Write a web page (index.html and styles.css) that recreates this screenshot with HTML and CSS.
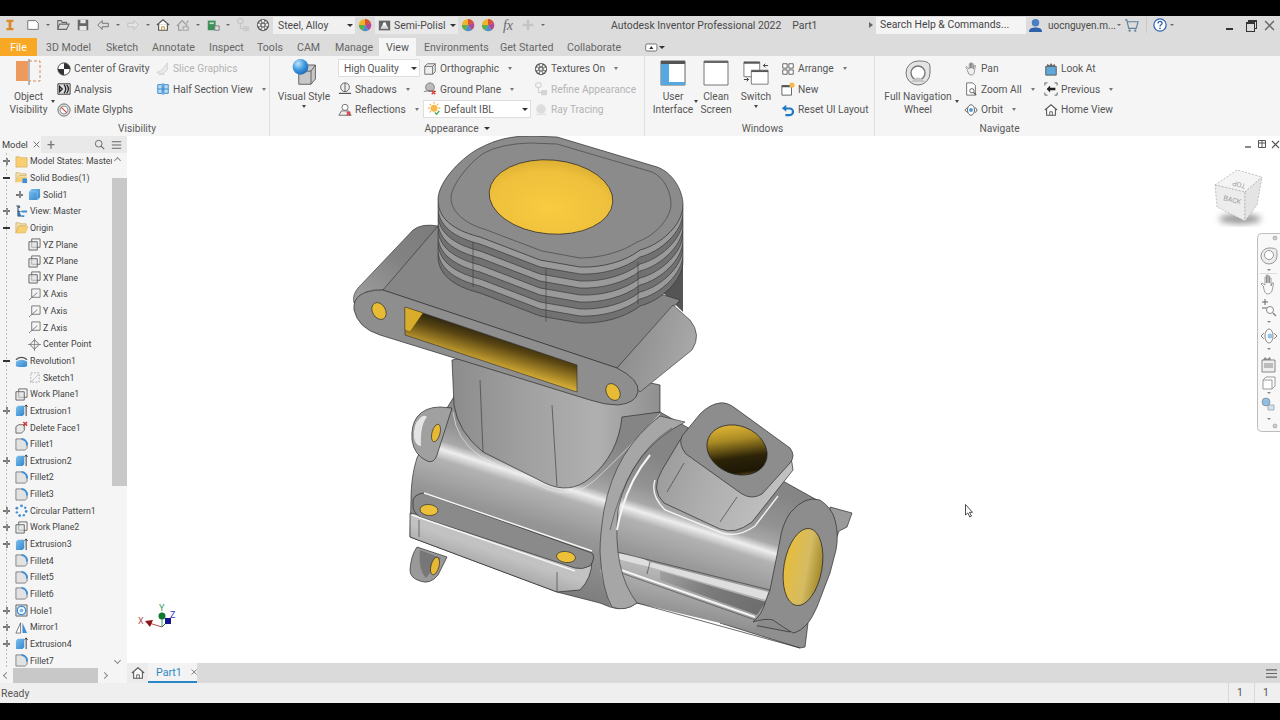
FILE: index.html
```html
<!DOCTYPE html>
<html lang="en">
<head>
<meta charset="utf-8">
<title>Autodesk Inventor Professional 2022</title>
<link rel="stylesheet" href="styles.css">
</head>
<body>
<svg class="defs" width="0" height="0" aria-hidden="true">
  <defs>
    <linearGradient id="bl" x1="0" y1="0" x2="1" y2="1"><stop offset="0" stop-color="#7fc0ee"/><stop offset="1" stop-color="#2f86cc"/></linearGradient>
    <radialGradient id="sph" cx=".35" cy=".3" r=".8"><stop offset="0" stop-color="#bfe4fa"/><stop offset=".5" stop-color="#3f9be0"/><stop offset="1" stop-color="#1a62b0"/></radialGradient>
    <symbol id="logo" viewBox="0 0 16 16"><path d="M4 2h8v2.500H9.600v7H12V14H4v-2.500h2.400v-7H4z" fill="#d98b2b"/></symbol>
    <symbol id="new" viewBox="0 0 16 16"><path d="M2 3h9l3 3v7H2z" fill="#fff" stroke="#666"/></symbol>
    <symbol id="open" viewBox="0 0 16 16"><path d="M2 13V3h4l1 2h5v2M2 13l2-6h11l-3 6z" fill="none" stroke="#666" stroke-width="1.200"/></symbol>
    <symbol id="save" viewBox="0 0 16 16"><path d="M2 2h12v12H2z" fill="#666"/><path d="M5 2h6v4H5zM4 9h8v5H4z" fill="#e6e6e6"/></symbol>
    <symbol id="undo" viewBox="0 0 16 16"><path d="M7 3L2 8l5 5v-3h7V6H7z" fill="#dcdcdc" stroke="#666"/></symbol>
    <symbol id="redo" viewBox="0 0 16 16"><path d="M9 3l5 5-5 5v-3H2V6h7z" fill="#e6e6e6" stroke="#bbb"/></symbol>
    <symbol id="home" viewBox="0 0 16 16"><path d="M1 8l7-6 7 6M3 7v7h10V7" fill="#fff" stroke="#555" stroke-width="1.300"/><path d="M6.500 14v-4h3v4" fill="none" stroke="#c08a2b"/></symbol>
    <symbol id="homeg" viewBox="0 0 16 16"><path d="M1 9l6-6 6 6M3 8v6h4M12 6l2-3" fill="none" stroke="#999" stroke-width="1.300"/><path d="M8 10h6v4H8z" fill="#ddd" stroke="#999"/></symbol>
    <symbol id="green" viewBox="0 0 16 16"><path d="M2 3h9v11H2z" fill="#3f8f5b"/><path d="M4 5h5v2H4z" fill="#bfe0c8"/><path d="M10 9h5v5h-5z" fill="#ddd" stroke="#777"/></symbol>
    <symbol id="refine" viewBox="0 0 16 16"><rect x="2" y="1" width="6" height="5" rx="1" fill="none" stroke="#bbb"/><path d="M5 6v6h3" fill="none" stroke="#bbb"/><rect x="8" y="9" width="7" height="6" rx="1" fill="#ccc"/></symbol>
    <symbol id="tex" viewBox="0 0 16 16"><circle cx="8" cy="8" r="7" fill="#555"/><g fill="#eee"><circle cx="8" cy="3.500" r="1.600"/><circle cx="8" cy="12.500" r="1.600"/><circle cx="3.500" cy="8" r="1.600"/><circle cx="12.500" cy="8" r="1.600"/><circle cx="5" cy="5" r="1.300"/><circle cx="11" cy="5" r="1.300"/><circle cx="5" cy="11" r="1.300"/><circle cx="11" cy="11" r="1.300"/><circle cx="8" cy="8" r="1.800"/></g></symbol>
    <symbol id="wheel" viewBox="0 0 16 16"><circle cx="8" cy="8" r="7" fill="#f0b429"/><path d="M8 8V1a7 7 0 0 1 6.500 4.500z" fill="#d8523c"/><path d="M8 8l6.500-2.500A7 7 0 0 1 12 14z" fill="#b0479b"/><path d="M8 8l4 6a7 7 0 0 1-7 .4z" fill="#4a90d9"/><path d="M8 8l-3 6.400A7 7 0 0 1 1 8z" fill="#5cae55"/></symbol>
    <symbol id="semi" viewBox="0 0 16 16"><path d="M1 2h14v12H1z" fill="#666"/><path d="M3 12l3-6h4l3 6z" fill="#ddd"/><circle cx="8" cy="6" r="2" fill="#fff"/></symbol>
    <symbol id="plus" viewBox="0 0 16 16"><path d="M6.500 2h3v4.500H14v3H9.500V14h-3V9.500H2v-3h4.500z" fill="#c4c4c4"/></symbol>
    <symbol id="user" viewBox="0 0 16 16"><circle cx="8" cy="5" r="4" fill="#4a7fc4"/><path d="M1 15c0-4 3-5 7-5s7 1 7 5z" fill="#2f62ad"/></symbol>
    <symbol id="cart" viewBox="0 0 16 16"><path d="M1 2h2l2 9h8l2-7H4" fill="none" stroke="#5e7f99" stroke-width="1.200"/><circle cx="6" cy="13.500" r="1.200" fill="#5e7f99"/><circle cx="12" cy="13.500" r="1.200" fill="#5e7f99"/></symbol>
    <symbol id="help" viewBox="0 0 16 16"><circle cx="8" cy="8" r="7" fill="#fff" stroke="#2f62ad" stroke-width="1.400"/><path d="M5.800 6.200c0-3 4.600-3 4.600-.2 0 1.800-2.400 1.700-2.400 3.600" fill="none" stroke="#2f62ad" stroke-width="1.500"/><circle cx="8" cy="11.800" r="1" fill="#2f62ad"/></symbol>
    <symbol id="objvis" viewBox="0 0 30 28"><path d="M2 3h12v20H2z" fill="#ee9a5e"/><path d="M15 1v26" stroke="#777"/><path d="M15 3h11v20H15" fill="none" stroke="#d9884f" stroke-dasharray="3 2"/></symbol>
    <symbol id="cog" viewBox="0 0 16 16"><circle cx="8" cy="8" r="7" fill="#fff" stroke="#333"/><path d="M8 8V1a7 7 0 0 1 7 7zM8 8v7a7 7 0 0 1-7-7z" fill="#333"/></symbol>
    <symbol id="analysis" viewBox="0 0 16 16"><path d="M1 2h14v12H1z" fill="#ddd" stroke="#333"/><path d="M3 5l3 3-3 3zM8 3q4 5 0 10M11 3q4 5 0 10" fill="none" stroke="#222" stroke-width="1.500"/></symbol>
    <symbol id="imate" viewBox="0 0 16 16"><circle cx="8" cy="8" r="7" fill="#ddd" stroke="#666"/><circle cx="8" cy="8" r="4.500" fill="#fff" stroke="#888"/><path d="M5 5l6 6" stroke="#c8574a" stroke-width="1.600"/></symbol>
    <symbol id="slice" viewBox="0 0 16 16"><path d="M1 12l6-3 6-8v8l-6 5z" fill="#e6e6e6" stroke="#c8c8c8"/><path d="M3 14h7" stroke="#ccc"/></symbol>
    <symbol id="half" viewBox="0 0 16 16"><path d="M2 3h5v10H2zM9 3h5v10H9z" fill="#bcdcf4" stroke="#2f86cc"/><path d="M2 8h12M8 1v14" stroke="#2f86cc"/></symbol>
    <symbol id="vstyle" viewBox="0 0 30 32"><path d="M12 11l6-3h10v16l-5 6H9V15z" fill="#c8c8c8" stroke="#555"/><path d="M9 15h14v15M23 15l5-7" fill="none" stroke="#555"/><circle cx="11" cy="10" r="9" fill="url(#sph)"/></symbol>
    <symbol id="shadow" viewBox="0 0 16 16"><circle cx="8" cy="6" r="5" fill="#eee" stroke="#555"/><path d="M8 1v10" stroke="#555"/><path d="M1 13h14" stroke="#555" stroke-width="1.400"/></symbol>
    <symbol id="reflect" viewBox="0 0 16 16"><path d="M1 14l3-5h8l3 5z" fill="#eee" stroke="#666"/><circle cx="8" cy="5" r="3.500" fill="#fff" stroke="#666"/><path d="M10 10l4 4M14 10l-4 4" stroke="#d33" stroke-width="1.500"/></symbol>
    <symbol id="ortho" viewBox="0 0 16 16"><path d="M2 5l3-3h9v9l-3 3H2z" fill="#eee" stroke="#666"/><path d="M2 5h9v9M11 5l3-3" fill="none" stroke="#666"/></symbol>
    <symbol id="ground" viewBox="0 0 16 16"><circle cx="8" cy="6" r="5" fill="#bbb" stroke="#777"/><path d="M1 11q7-3 14 0" stroke="#777" fill="none"/><path d="M10 10l4 4M14 10l-4 4" stroke="#d33" stroke-width="1.500"/></symbol>
    <symbol id="ibl" viewBox="0 0 16 16"><circle cx="8" cy="7" r="4" fill="#f6b84a"/><g stroke="#f2a83b" stroke-width="1.200"><path d="M8 0v2M1 7h2M13 7h2M3 2l1.500 1.500M13 2l-1.500 1.500M3 12l1.500-1.500"/></g><path d="M9 12l2 2 3-4" stroke="#4caf50" stroke-width="1.500" fill="none"/></symbol>
    <symbol id="ray" viewBox="0 0 16 16"><circle cx="8" cy="7" r="5.500" fill="#d8d8d8"/><path d="M2 13h12" stroke="#e2e2e2" stroke-width="2"/></symbol>
    <symbol id="ui" viewBox="0 0 26 26"><path d="M1 1h24v24H1z" fill="#fff" stroke="#666"/><path d="M1 1h24v3H1z" fill="#555"/><path d="M1 4h8v21H1z" fill="#57a8e2"/><path d="M9 22h16v3H9z" fill="#57a8e2"/></symbol>
    <symbol id="clean" viewBox="0 0 26 26"><path d="M1 1h24v24H1z" fill="#fff" stroke="#777"/><path d="M1 1h24v2H1z" fill="#666"/></symbol>
    <symbol id="switch" viewBox="0 0 28 26"><path d="M1 1h17v16H1z" fill="#fff" stroke="#777"/><path d="M1 1h17v2H1z" fill="#555"/><path d="M9 10h18v15H9z" fill="#fff" stroke="#777"/><path d="M9 10h18v2H9z" fill="#555"/><path d="M27 5h-5M24 3l-2 2 2 2M1 20h5M4 18l2 2-2 2" fill="none" stroke="#333"/></symbol>
    <symbol id="arrange" viewBox="0 0 16 16"><path d="M2 2h5v5H2zM9 2h5v5H9zM2 9h5v5H2zM9 9h5v5H9z" fill="#fff" stroke="#555"/></symbol>
    <symbol id="newwin" viewBox="0 0 16 16"><path d="M1 4h11v11H1z" fill="#fff" stroke="#555"/><path d="M1 4h11v2H1z" fill="#555"/><circle cx="12.500" cy="3.500" r="3" fill="#f6b84a"/></symbol>
    <symbol id="reset" viewBox="0 0 16 16"><path d="M6 2L1 6l5 4V7.500h4a2.500 2.500 0 0 1 0 5H5V15h5a5 5 0 0 0 0-10H6z" fill="#1f79c4"/></symbol>
    <symbol id="navw" viewBox="0 0 26 26"><path d="M13 1c8 0 12 1 12 6v6a12 12 0 1 1-12-12z" fill="#e4e4e4" stroke="#777"/><circle cx="13" cy="13" r="7" fill="#fff" stroke="#777" stroke-width="1.400"/><path d="M6 22q7-9 14 0" fill="#c4c4c4"/></symbol>
    <symbol id="pan" viewBox="0 0 16 16"><path d="M4 9L2 6l1-1 3 3V2h1.500v5V1H9v6-5h1.500v6l1-4H13l-1 6q0 5-4 5-3 0-4-5z" fill="#eee" stroke="#777" stroke-width=".8"/></symbol>
    <symbol id="zoomall" viewBox="0 0 16 16"><path d="M3 1h7l3 3v11H3z" fill="#fff" stroke="#666"/><circle cx="9" cy="10" r="2.500" fill="#fff" stroke="#555"/><path d="M11 12l3 3" stroke="#555" stroke-width="1.400"/></symbol>
    <symbol id="orbit" viewBox="0 0 16 16"><path d="M1 8l3-3M1 8l3 3M15 8l-2-3M15 8l-2 3" stroke="#555" fill="none"/><ellipse cx="8" cy="8" rx="4" ry="6" fill="#fff" stroke="#555"/><circle cx="8" cy="8" r="2.200" fill="#4a9bd9"/></symbol>
    <symbol id="look" viewBox="0 0 16 16"><path d="M2 5h12v10H2z" fill="#5fa8d8" stroke="#555"/><path d="M3 5l1-3 2 2 2-3 2 3 2-2 1 3" fill="#666"/></symbol>
    <symbol id="prev" viewBox="0 0 16 16"><path d="M1 4V1h3M12 1h3v3M15 12v3h-3M4 15H1v-3" fill="none" stroke="#555"/><path d="M7 4L3 8l4 4V9.500h6v-3H7z" fill="#222"/></symbol>
    <symbol id="homev" viewBox="0 0 16 16"><path d="M1 8l7-6 7 6M3 7v7h10V7" fill="#fff" stroke="#555" stroke-width="1.200"/><path d="M6.500 14v-4h3v4" fill="none" stroke="#555"/></symbol>
    <symbol id="widget" viewBox="0 0 20 12"><rect x="1" y="1" width="16" height="10" rx="2" fill="#fff" stroke="#444"/><path d="M6 8l3-4 3 4z" fill="#333"/></symbol>
    <symbol id="close" viewBox="0 0 10 10"><path d="M1 1l8 8M9 1l-8 8" stroke="#666" stroke-width="1.300"/></symbol>
    <symbol id="search" viewBox="0 0 14 14"><circle cx="6" cy="6" r="4.300" fill="none" stroke="#666" stroke-width="1.200"/><path d="M9 9l4 4" stroke="#666" stroke-width="1.400"/></symbol>
    <symbol id="burger" viewBox="0 0 14 12"><path d="M1 2h12M1 6h12M1 10h12" stroke="#666" stroke-width="1.300"/></symbol>
    <symbol id="t-folder" viewBox="0 0 14 14"><path d="M1 2h4l1 1h7v10H1z" fill="#f8cf73" stroke="#d4a94c" stroke-width=".7"/></symbol>
    <symbol id="t-folderb" viewBox="0 0 14 14"><path d="M1 2h4l1 1h6v2H4l-3 7z" fill="#f3e3b6" stroke="#c9a24a" stroke-width=".7"/><path d="M1 12l3-6h9l-2 6z" fill="#f8cf73"/><path d="M8 8h5v5H8z" fill="#3f8fd6"/></symbol>
    <symbol id="t-foldero" viewBox="0 0 14 14"><path d="M1 2h4l1 1h6v2H4l-3 8z" fill="#f3e3b6" stroke="#c9a24a" stroke-width=".7"/><path d="M1 13l3-7h10l-3 7z" fill="#f8cf73" stroke="#d4a94c" stroke-width=".5"/></symbol>
    <symbol id="t-solid" viewBox="0 0 14 14"><path d="M1 4l3-3h9v9l-3 3H1z" fill="url(#bl)"/><path d="M1 4h9v9" fill="none" stroke="#9fd2f5" stroke-width=".5"/></symbol>
    <symbol id="t-view" viewBox="0 0 14 14"><path d="M3 1h2v2H3zM1 1h3M3 3v9h4M3 7h4" fill="#2f86cc" stroke="#444" stroke-width=".7"/><path d="M7 6h6v2H7zM7 11h3v2H7z" fill="#3f8fd6"/></symbol>
    <symbol id="t-plane" viewBox="0 0 14 14"><path d="M4 1h9v9H4z" fill="none" stroke="#666"/><path d="M1 4h9v9H1z" fill="#ddd" fill-opacity=".6" stroke="#666"/></symbol>
    <symbol id="t-axis" viewBox="0 0 14 14"><path d="M4 1h9v9H4V1" fill="none" stroke="#777"/><path d="M1 13l9-8" stroke="#777"/></symbol>
    <symbol id="t-point" viewBox="0 0 14 14"><path d="M7 2l5 5-5 5-5-5z" fill="none" stroke="#666"/><path d="M7 0v14M0 7h14" stroke="#666" stroke-width=".7"/></symbol>
    <symbol id="t-rev" viewBox="0 0 14 14"><path d="M1 7q6-4 12 0v5q-6 2-12 0z" fill="url(#bl)"/><path d="M1 5q6-5 12 0" fill="none" stroke="#555" stroke-width="1.400"/></symbol>
    <symbol id="t-sketch" viewBox="0 0 14 14"><path d="M3 2h9v10H3z" fill="none" stroke="#aaa" stroke-dasharray="2 1.500"/><path d="M2 13l9-9" stroke="#bbb"/></symbol>
    <symbol id="t-ext" viewBox="0 0 14 14"><path d="M1 4l2-2h7v9l-2 2H1z" fill="url(#bl)"/><path d="M12 13V1M10.500 3L12 1l1.500 2" fill="none" stroke="#333"/></symbol>
    <symbol id="t-del" viewBox="0 0 14 14"><path d="M1 6l3-2h6v6l-3 3H1z" fill="#e8e8e8" stroke="#666"/><path d="M9 1l4 4M13 1L9 5" stroke="#d42e2e" stroke-width="1.500"/></symbol>
    <symbol id="t-fil" viewBox="0 0 14 14"><path d="M1 1h7q5 1 5 6v4l-2 2H1z" fill="#e2e2e2" stroke="#666" stroke-width=".8"/><path d="M7 1q6 1 6 7" fill="none" stroke="#3f8fd6" stroke-width="2"/></symbol>
    <symbol id="t-pat" viewBox="0 0 14 14"><g fill="#3f8fd6"><circle cx="7" cy="2" r="1.500"/><circle cx="11" cy="4" r="1.300"/><circle cx="12" cy="8" r="1.500"/><circle cx="9.500" cy="12" r="1.300"/><circle cx="5" cy="12.500" r="1.500"/><circle cx="2" cy="9" r="1.300"/><circle cx="2" cy="4.500" r="1.500"/></g></symbol>
    <symbol id="t-hole" viewBox="0 0 14 14"><path d="M1 1h12v12H1z" fill="#ddd" stroke="#666"/><circle cx="7" cy="7" r="4.500" fill="#fff" stroke="#3f8fd6" stroke-width="1.500"/><circle cx="7" cy="7" r="2.200" fill="#7fb8e4"/></symbol>
    <symbol id="t-mir" viewBox="0 0 14 14"><path d="M6 2L1 13h5z" fill="#fff" stroke="#555" stroke-width=".8"/><path d="M8 2l5 11H8z" fill="#3f8fd6"/></symbol>
    <linearGradient id="bodyG" gradientUnits="userSpaceOnUse" x1="480" y1="400" x2="430" y2="560"><stop offset="0" stop-color="#858585"/><stop offset=".2" stop-color="#939393"/><stop offset=".3" stop-color="#a8a8a8"/><stop offset=".35" stop-color="#eeeeee"/><stop offset=".41" stop-color="#b2b2b2"/><stop offset=".6" stop-color="#969696"/><stop offset="1" stop-color="#7a7a7a"/></linearGradient>
    <linearGradient id="neckG" x1="0" y1="0" x2="1" y2="0"><stop offset="0" stop-color="#8c8c8c"/><stop offset=".35" stop-color="#a0a0a0"/><stop offset=".7" stop-color="#b0b0b0"/><stop offset="1" stop-color="#8f8f8f"/></linearGradient>
    <linearGradient id="bossG" x1="0" y1="0" x2="1" y2=".3"><stop offset="0" stop-color="#949494"/><stop offset=".5" stop-color="#adadad"/><stop offset="1" stop-color="#c0c0c0"/></linearGradient>
    <linearGradient id="flR" x1="0" y1="0" x2="1" y2=".3"><stop offset="0" stop-color="#888"/><stop offset=".6" stop-color="#9a9a9a"/><stop offset="1" stop-color="#a8a8a8"/></linearGradient>
    <linearGradient id="flL" x1="0" y1="1" x2="1" y2="0"><stop offset="0" stop-color="#a0a0a0"/><stop offset=".5" stop-color="#838383"/><stop offset="1" stop-color="#7a7a7a"/></linearGradient>
    <linearGradient id="slotG" gradientUnits="userSpaceOnUse" x1="500" y1="328" x2="488" y2="370"><stop offset="0" stop-color="#111"/><stop offset=".4" stop-color="#5a4612"/><stop offset="1" stop-color="#f0c33c"/></linearGradient>
    <radialGradient id="topG" cx=".5" cy=".65" r=".7"><stop offset="0" stop-color="#f8cb40"/><stop offset=".7" stop-color="#eec03c"/><stop offset="1" stop-color="#d8aa30"/></radialGradient>
    <linearGradient id="bossH" gradientUnits="userSpaceOnUse" x1="722" y1="428" x2="748" y2="474"><stop offset="0" stop-color="#e2b736"/><stop offset=".3" stop-color="#a98a24"/><stop offset=".65" stop-color="#2c2308"/><stop offset=".92" stop-color="#1d1705"/><stop offset="1" stop-color="#5a4712"/></linearGradient>
    <linearGradient id="endH" x1="0" y1="0" x2="1" y2="0"><stop offset="0" stop-color="#e7bd3c"/><stop offset=".6" stop-color="#d5bb62"/><stop offset="1" stop-color="#a38a2c"/></linearGradient>
    <linearGradient id="railS" gradientUnits="userSpaceOnUse" x1="460" y1="540" x2="450" y2="570"><stop offset="0" stop-color="#c2c2c2"/><stop offset="1" stop-color="#9a9a9a"/></linearGradient>
    <linearGradient id="lowG" gradientUnits="userSpaceOnUse" x1="690" y1="575" x2="680" y2="625"><stop offset="0" stop-color="#b8b8b8"/><stop offset="1" stop-color="#888"/></linearGradient>
    <linearGradient id="wedgeG" gradientUnits="userSpaceOnUse" x1="660" y1="570" x2="760" y2="605"><stop offset="0" stop-color="#a0a0a0"/><stop offset=".5" stop-color="#7b7b7b"/><stop offset="1" stop-color="#6e6e6e"/></linearGradient>
    <filter id="soft" x="-30%" y="-30%" width="160%" height="160%"><feGaussianBlur stdDeviation="3"/></filter>
    <path id="headS" d="M438 200C438 180 465 155 480 148C495 140 510 136 530 136L557 137L657 167C672 172 683 190 683 205C683 225 660 245 640 250C625 262 600 268 580 267L540 260L480 237C460 232 438 222 438 200Z"/>
  </defs>
</svg>

<div class="app">
  <header class="titlebar">
    <svg class="logo"><use href="#logo"/></svg>
    <span class="qa"><svg><use href="#new"/></svg></span><i class="qc"></i>
    <span class="qa"><svg><use href="#open"/></svg></span>
    <span class="qa"><svg><use href="#save"/></svg></span>
    <span class="qa"><svg><use href="#undo"/></svg></span><i class="qc"></i>
    <span class="qa"><svg><use href="#redo"/></svg></span><i class="qc"></i>
    <span class="qa"><svg><use href="#home"/></svg></span>
    <span class="qa"><svg><use href="#homeg"/></svg></span><i class="qc"></i>
    <span class="qa"><svg><use href="#green"/></svg></span><i class="qc"></i>
    <span class="qa"><svg><use href="#refine"/></svg></span>
    <span class="qa"><svg><use href="#tex"/></svg></span>
    <div class="qcombo material"><span>Steel, Alloy</span><b class="caret dark"></b></div>
    <span class="qa"><svg><use href="#wheel"/></svg></span>
    <div class="qcombo visual"><svg><use href="#semi"/></svg><span class="clip">Semi-Polisl</span><b class="caret dark"></b></div>
    <span class="qa"><svg><use href="#wheel"/></svg></span>
    <span class="qa"><svg><use href="#wheel"/></svg></span>
    <span class="qa fx">fx</span>
    <span class="qa"><svg><use href="#plus"/></svg></span><i class="qc"></i>
    <div class="apptitle"><span>Autodesk Inventor Professional 2022</span><span>Part1</span></div>
    <div class="t-right">
      <i class="tri-r"></i>
      <div class="searchbox">Search Help &amp; Commands...</div>
      <svg class="t-user"><use href="#user"/></svg>
      <span class="username">uocnguyen.m...</span><i class="qc"></i>
      <svg class="t-cart"><use href="#cart"/></svg>
      <i class="t-sep"></i>
      <svg class="t-help"><use href="#help"/></svg><i class="qc"></i>
      <div class="winctl">
        <span class="min"></span>
        <span class="rest"></span>
        <span class="cls"><svg><use href="#close"/></svg></span>
      </div>
    </div>
  </header>

  <nav class="tabs">
    <span class="tab file">File</span>
    <span class="tab t1">3D Model</span>
    <span class="tab t2">Sketch</span>
    <span class="tab t3">Annotate</span>
    <span class="tab t4">Inspect</span>
    <span class="tab t5">Tools</span>
    <span class="tab t6">CAM</span>
    <span class="tab t7">Manage</span>
    <span class="tab active">View</span>
    <span class="tab t9">Environments</span>
    <span class="tab t10">Get Started</span>
    <span class="tab t11">Collaborate</span>
    <svg class="widget"><use href="#widget"/></svg><b class="caret dark"></b>
  </nav>

  <section class="ribbon">
    <div class="panel p-vis">
      <div class="pbody">
        <div class="big b-obj"><svg class="ico30"><use href="#objvis"/></svg><span>Object<br>Visibility</span><b class="caret side"></b></div>
        <div class="col c-a">
          <div class="cmd"><svg><use href="#cog"/></svg>Center of Gravity</div>
          <div class="cmd"><svg><use href="#analysis"/></svg>Analysis</div>
          <div class="cmd"><svg><use href="#imate"/></svg>iMate Glyphs</div>
        </div>
        <div class="col">
          <div class="cmd off"><svg><use href="#slice"/></svg>Slice Graphics</div>
          <div class="cmd"><svg><use href="#half"/></svg>Half Section View<b class="caret"></b></div>
        </div>
      </div>
      <div class="ptitle">Visibility</div>
    </div>
    <div class="panel p-app">
      <div class="pbody">
        <div class="big b-vs"><svg class="ico30"><use href="#vstyle"/></svg><span>Visual Style</span><b class="caret under"></b></div>
        <div class="col c-q">
          <div class="combo hq"><span>High Quality</span><b class="caret dark"></b></div>
          <div class="cmd"><svg><use href="#shadow"/></svg>Shadows<b class="caret"></b></div>
          <div class="cmd"><svg><use href="#reflect"/></svg>Reflections<b class="caret"></b></div>
        </div>
        <div class="col c-o">
          <div class="cmd"><svg><use href="#ortho"/></svg>Orthographic<b class="caret"></b></div>
          <div class="cmd"><svg><use href="#ground"/></svg>Ground Plane<b class="caret"></b></div>
          <div class="combo ibl"><svg><use href="#ibl"/></svg><span>Default IBL</span><b class="caret dark"></b></div>
        </div>
        <div class="col">
          <div class="cmd"><svg><use href="#tex"/></svg>Textures On<b class="caret"></b></div>
          <div class="cmd off"><svg><use href="#refine"/></svg>Refine Appearance</div>
          <div class="cmd off"><svg><use href="#ray"/></svg>Ray Tracing</div>
        </div>
      </div>
      <div class="ptitle">Appearance<b class="caret dark"></b></div>
    </div>
    <div class="panel p-win">
      <div class="pbody">
        <div class="big b-ui"><svg class="ico26"><use href="#ui"/></svg><span>User<br>Interface</span><b class="caret side"></b></div>
        <div class="big b-cl"><svg class="ico26"><use href="#clean"/></svg><span>Clean<br>Screen</span></div>
        <div class="big b-sw"><svg class="ico26"><use href="#switch"/></svg><span>Switch</span><b class="caret under"></b></div>
        <div class="col c-w">
          <div class="cmd"><svg><use href="#arrange"/></svg>Arrange<b class="caret"></b></div>
          <div class="cmd"><svg><use href="#newwin"/></svg>New</div>
          <div class="cmd"><svg><use href="#reset"/></svg>Reset UI Layout</div>
        </div>
      </div>
      <div class="ptitle">Windows</div>
    </div>
    <div class="panel p-nav">
      <div class="pbody">
        <div class="big b-nav"><svg class="ico26"><use href="#navw"/></svg><span>Full Navigation<br>Wheel</span><b class="caret side"></b></div>
        <div class="col c-n">
          <div class="cmd"><svg><use href="#pan"/></svg>Pan</div>
          <div class="cmd"><svg><use href="#zoomall"/></svg>Zoom All<b class="caret"></b></div>
          <div class="cmd"><svg><use href="#orbit"/></svg>Orbit<b class="caret"></b></div>
        </div>
        <div class="col">
          <div class="cmd"><svg><use href="#look"/></svg>Look At</div>
          <div class="cmd"><svg><use href="#prev"/></svg>Previous<b class="caret"></b></div>
          <div class="cmd"><svg><use href="#homev"/></svg>Home View</div>
        </div>
      </div>
      <div class="ptitle">Navigate</div>
    </div>
  </section>

  <main class="work">
    <aside class="browser">
      <div class="bhead">
        <div class="btab">Model<svg class="x"><use href="#close"/></svg></div>
        <span class="bplus">+</span>
        <svg class="bsearch"><use href="#search"/></svg>
        <svg class="bburger"><use href="#burger"/></svg>
      </div>
      <div class="bbody">
        <div class="tree">
          <div class="row"><i class="ex p"></i><svg><use href="#t-folder"/></svg>Model States: Master</div>
          <div class="row"><i class="ex m"></i><svg><use href="#t-folderb"/></svg>Solid Bodies(1)</div>
          <div class="row l1"><i class="ex p"></i><svg><use href="#t-solid"/></svg>Solid1</div>
          <div class="row"><i class="ex p"></i><svg><use href="#t-view"/></svg>View: Master</div>
          <div class="row"><i class="ex m"></i><svg><use href="#t-foldero"/></svg>Origin</div>
          <div class="row l1"><i class="ex"></i><svg><use href="#t-plane"/></svg>YZ Plane</div>
          <div class="row l1"><i class="ex"></i><svg><use href="#t-plane"/></svg>XZ Plane</div>
          <div class="row l1"><i class="ex"></i><svg><use href="#t-plane"/></svg>XY Plane</div>
          <div class="row l1"><i class="ex"></i><svg><use href="#t-axis"/></svg>X Axis</div>
          <div class="row l1"><i class="ex"></i><svg><use href="#t-axis"/></svg>Y Axis</div>
          <div class="row l1"><i class="ex"></i><svg><use href="#t-axis"/></svg>Z Axis</div>
          <div class="row l1"><i class="ex"></i><svg><use href="#t-point"/></svg>Center Point</div>
          <div class="row"><i class="ex m"></i><svg><use href="#t-rev"/></svg>Revolution1</div>
          <div class="row l1"><i class="ex"></i><svg><use href="#t-sketch"/></svg>Sketch1</div>
          <div class="row"><i class="ex"></i><svg><use href="#t-plane"/></svg>Work Plane1</div>
          <div class="row"><i class="ex p"></i><svg><use href="#t-ext"/></svg>Extrusion1</div>
          <div class="row"><i class="ex"></i><svg><use href="#t-del"/></svg>Delete Face1</div>
          <div class="row"><i class="ex"></i><svg><use href="#t-fil"/></svg>Fillet1</div>
          <div class="row"><i class="ex p"></i><svg><use href="#t-ext"/></svg>Extrusion2</div>
          <div class="row"><i class="ex"></i><svg><use href="#t-fil"/></svg>Fillet2</div>
          <div class="row"><i class="ex"></i><svg><use href="#t-fil"/></svg>Fillet3</div>
          <div class="row"><i class="ex p"></i><svg><use href="#t-pat"/></svg>Circular Pattern1</div>
          <div class="row"><i class="ex p"></i><svg><use href="#t-plane"/></svg>Work Plane2</div>
          <div class="row"><i class="ex p"></i><svg><use href="#t-ext"/></svg>Extrusion3</div>
          <div class="row"><i class="ex"></i><svg><use href="#t-fil"/></svg>Fillet4</div>
          <div class="row"><i class="ex"></i><svg><use href="#t-fil"/></svg>Fillet5</div>
          <div class="row"><i class="ex"></i><svg><use href="#t-fil"/></svg>Fillet6</div>
          <div class="row"><i class="ex p"></i><svg><use href="#t-hole"/></svg>Hole1</div>
          <div class="row"><i class="ex p"></i><svg><use href="#t-mir"/></svg>Mirror1</div>
          <div class="row"><i class="ex p"></i><svg><use href="#t-ext"/></svg>Extrusion4</div>
          <div class="row"><i class="ex"></i><svg><use href="#t-fil"/></svg>Fillet7</div>
        </div>
        <div class="vscroll"><i class="chev ch-up"></i><div class="vthumb"></div><i class="chev ch-down"></i></div>
      </div>
      <div class="hscroll"><i class="chev ch-left"></i><div class="hthumb"></div><i class="chev ch-right"></i></div>
    </aside>

    <div class="stage">
      <div class="viewport">
        <svg class="scene" viewBox="127 136 1153 527" aria-label="Engine housing model">
          <!-- lower wing behind body -->
          <path d="M720 623L800 648L805 647L808 623L770 600Z" fill="#8f8f8f" stroke="#2d2d2d" stroke-width=".7"/>
          <path d="M830 507L852 513L847 527L839 531L828 560Z" fill="#9a9a9a" stroke="#2d2d2d" stroke-width=".7"/>
          <!-- main body -->
          <path d="M411 500C411 485 413 470 417 458C425 440 440 420 455 395L660 412L790 485L817 500L790 632L637 603Q625 612 610 607L600 603L557 592L410 537Z" fill="url(#bodyG)" stroke="#2d2d2d" stroke-width=".7"/>
          <path d="M615 555L770 592L762 612L755 630L720 623L637 603Q625 612 610 607L600 570Z" fill="url(#lowG)"/>
          <path d="M660 571L766 602L757 615L660 580Z" fill="url(#wedgeG)"/>
          <path d="M617 553Q640 556 650 562L768 592L766 600L650 567Q625 561 615 558Z" fill="#dedede"/>
          <path d="M607 565L755 617" stroke="#f4f4f4" stroke-width="2"/>
          <path d="M607 568L755 620" stroke="#444" stroke-width=".6"/>
          <path d="M617 552L770 590" stroke="#333" stroke-width=".6" fill="none"/>
          <path d="M650 562L647 574" stroke="#333" stroke-width=".6"/>
          <path d="M637 603L800 648" stroke="#2d2d2d" stroke-width=".7"/>
          <!-- neck -->
          <path d="M452 360L454 405Q458 432 483 452L545 483Q570 495 590 478Q618 455 622 417L660 412L660 385L500 350Z" fill="url(#neckG)" stroke="#2d2d2d" stroke-width=".7"/>
          <path d="M480 380L483 452M552 405L557 486" stroke="#333" stroke-width=".6" fill="none"/>
          <path d="M453 412Q456 440 481 457L545 488Q572 500 595 480Q625 452 660 414" fill="none" stroke="#e8e8e8" stroke-width="1" opacity=".7"/>
          <!-- ears -->
          <path d="M412 440Q411 425 417 417Q425 407 440 407L452 408L437 455Q434 464 427 461Q414 455 412 440Z" fill="#a0a0a0" stroke="#2d2d2d" stroke-width=".7"/>
          <path d="M414 438Q413 424 420 418Q424 414 427 417Q420 425 421 446Q416 446 414 438Z" fill="#e4e4e4"/>
          <ellipse cx="436" cy="433" rx="4" ry="9" transform="rotate(15 436 433)" fill="#e7b934" stroke="#222" stroke-width=".6"/>
          <path d="M410 570Q411 555 417 547L447 557L438 575Q430 585 420 581Q410 578 410 570Z" fill="#999" stroke="#2d2d2d" stroke-width=".7"/>
          <path d="M420 550L441 558L432 570L426 578Q418 570 420 550Z" fill="#777"/>
          <ellipse cx="435" cy="566" rx="4" ry="9" transform="rotate(15 435 566)" fill="#e7b934" stroke="#222" stroke-width=".6"/>
          <!-- rail -->
          <path d="M410 513L410 537L557 592L580 590Q592 578 592 560L420 515Z" fill="url(#railS)" stroke="#2d2d2d" stroke-width=".7"/>
          <path d="M413 503Q412 495 423 493L592 553Q596 558 590 566Q582 570 575 568L420 517Q412 512 413 503Z" fill="#8a8a8a" stroke="#2d2d2d" stroke-width=".7"/>
          <path d="M424 493L592 551M412 515L575 571" stroke="#f5f5f5" stroke-width="1.400" fill="none"/>
          <path d="M419 520L419 537M557 572L557 592" stroke="#333" stroke-width=".6"/>
          <ellipse cx="429" cy="510" rx="9" ry="5.500" transform="rotate(5 429 510)" fill="#ecc038" stroke="#222" stroke-width=".6"/>
          <ellipse cx="566" cy="557" rx="9.500" ry="5.500" transform="rotate(8 566 557)" fill="#ecc038" stroke="#222" stroke-width=".6"/>
          <!-- ring -->
          <path d="M660 416Q615 450 604 510Q600 535 600 552Q602 590 612 607Q625 612 637 603Q612 570 618 510Q630 450 685 422Z" fill="#a6a6a6" stroke="#2d2d2d" stroke-width=".6"/>
          <path d="M650 455Q625 485 617 530" fill="none" stroke="#f5f5f5" stroke-width="2"/>
          <path d="M672 428Q628 455 610 530" fill="none" stroke="#444" stroke-width=".6"/>
          <!-- boss -->
          <path d="M680 440L662 470Q650 490 664 503L720 529Q735 535 752 522L793 470L790 450L720 403Z" fill="url(#bossG)" stroke="#2d2d2d" stroke-width=".7"/>
          <path d="M655 480Q650 495 665 510L722 533Q738 538 755 526L778 496" fill="none" stroke="#f2f2f2" stroke-width="1.400"/>
          <path d="M684 463L667 492M737 497L720 522" stroke="#333" stroke-width=".6"/>
          <path d="M720 403Q727 402 735 408L790 448Q796 456 790 463L762 494Q752 500 742 494L686 454Q678 444 682 436L700 414Q710 404 720 403Z" fill="#8d8d8d" stroke="#2d2d2d" stroke-width=".7"/>
          <ellipse cx="737" cy="450" rx="31" ry="24" transform="rotate(22 737 450)" fill="url(#bossH)" stroke="#222" stroke-width=".7"/>
          <!-- end flange -->
          <path d="M820 500Q832 508 835 520Q839 535 836 550L830 573L817 607Q812 618 808 623Q800 632 793 633Q784 628 773 620Q765 618 753 622Q762 615 766 600L770 590L780 540Q782 525 790 513Q805 495 820 500Z" fill="#8d8d8d" stroke="#2d2d2d" stroke-width=".7"/>
          <ellipse cx="803" cy="567" rx="19" ry="39" transform="rotate(10 803 567)" fill="url(#endH)" stroke="#222" stroke-width=".7"/>
          <!-- head fins -->
          <path d="M655 285L683 205L683 312Z" fill="#555"/>
          <!-- flange -->
          <path d="M354 303Q352 295 358 288L413 230Q422 223 438 226L450 262L383 290Q365 287 354 303Z" fill="url(#flL)" stroke="#2d2d2d" stroke-width=".6"/>
          <path d="M438 226L680 300L617 368L383 290Z" fill="#868686" stroke="#2d2d2d" stroke-width=".6"/>
          <path d="M617 368L673 305L690 320Q702 335 692 350L640 392Z" fill="url(#flR)" stroke="#2d2d2d" stroke-width=".6"/>
          <path d="M383 290L617 368Q640 380 638 392Q636 403 618 405Q605 405 590 400L380 335Q358 328 354 310Q352 290 383 290Z" fill="#8e8e8e" stroke="#2d2d2d" stroke-width=".7"/>
          <path d="M405 307L577 365L577 392L405 335Z" fill="url(#slotG)" stroke="#2d2d2d" stroke-width=".6"/>
          <path d="M405 307L423 313L410 332L405 330Z" fill="#d9ad2c" stroke="#5a4612" stroke-width=".5"/>
          <ellipse cx="379" cy="311" rx="6.500" ry="9" transform="rotate(-30 379 311)" fill="#e8bb35" stroke="#222" stroke-width=".6"/>
          <ellipse cx="613" cy="392" rx="6.500" ry="9" transform="rotate(-30 613 392)" fill="#e8bb35" stroke="#222" stroke-width=".6"/>
          <use href="#headS" class="fin f-a" y="56"/>
          <use href="#headS" class="fin f-b" y="49"/>
          <use href="#headS" class="fin f-a" y="42"/>
          <use href="#headS" class="fin f-b" y="35"/>
          <use href="#headS" class="fin f-a" y="28"/>
          <use href="#headS" class="fin f-b" y="21"/>
          <use href="#headS" class="fin f-a" y="14"/>
          <use href="#headS" class="fin f-b" y="7"/>
          <path d="M473 242L473 287M546 268L546 322M638 262L638 304" stroke="#3a3a3a" stroke-width=".6"/>
          <use href="#headS" class="fin f-top"/>
          <path d="M451 198C451 185 470 162 484 153Q500 144 530 143L557 144L652 172C664 177 671 192 671 204C671 218 655 236 637 242C622 252 600 258 580 258L542 251L484 229C466 224 451 212 451 198Z" fill="none" stroke="#3a3a3a" stroke-width=".6"/>
          <ellipse cx="551" cy="197" rx="62" ry="37" transform="rotate(5 551 197)" fill="url(#topG)" stroke="#222" stroke-width=".7"/>
          <!-- triad -->
          <g class="triad">
            <path d="M162 627L149 623" stroke="#b04a4a" fill="none"/>
            <path d="M162 627V616" stroke="#35a060" fill="none"/>
            <path d="M162 627L168 621" stroke="#555" fill="none"/>
            <path d="M145 621l8-1-3 7z" fill="#8c1414"/>
            <circle cx="162" cy="616" r="3.500" fill="#0d7a2f"/>
            <rect x="165" y="618" width="6" height="6" fill="#14148c"/>
            <text x="138" y="624" fill="#b04a4a">X</text>
            <text x="159" y="611" fill="#35a060">Y</text>
            <text x="170" y="618" fill="#3a3ad0">Z</text>
          </g>
          <!-- view cube -->
          <g class="cube">
            <ellipse cx="1240" cy="219" rx="21" ry="5" fill="#999" filter="url(#soft)"/>
            <path d="M1215 185L1237 170L1262 177L1245 192Z" fill="#f4f4f4" stroke="#aaa" stroke-width=".7" stroke-dasharray="2 1.500"/>
            <path d="M1215 185L1245 192L1245 221L1217 207Z" fill="#ececec" stroke="#aaa" stroke-width=".7" stroke-dasharray="2 1.500"/>
            <path d="M1245 192L1262 177L1257 205L1245 221Z" fill="#e4e4e4" stroke="#aaa" stroke-width=".7" stroke-dasharray="2 1.500"/>
            <text transform="translate(1223 200) rotate(14)">BACK</text>
            <text transform="translate(1246 184) rotate(195)">TOP</text>
          </g>
          <!-- canvas window controls -->
          <path d="M1245 147h6" stroke="#555" stroke-width="1.400"/>
          <path d="M1258.500 140.500h7v7h-7zM1262 140.500v7M1258.500 143h7" fill="#fff" stroke="#555"/>
          <path d="M1272 141l7 7M1279 141l-7 7" stroke="#555" stroke-width="1.100"/>
          <!-- navigation bar -->
          <g class="navbar">
            <rect x="1257.500" y="233.500" width="30" height="198" rx="4" fill="#f8f8f8" stroke="#bdbdbd"/>
            <circle cx="1275" cy="238" r="2" fill="#ccc" stroke="#999" stroke-width=".6"/>
            <circle cx="1275" cy="426" r="2" fill="#ccc" stroke="#999" stroke-width=".6"/>
            <path d="M1269 248c7 0 8 1 8 5v3a8 8 0 1 1-8-8z" fill="#ececec" stroke="#999"/>
            <circle cx="1269" cy="255" r="4.500" fill="#fff" stroke="#999"/>
            <path d="M1260 273.500h17" stroke="#ddd"/>
            <path d="M1267 269l2 2 2-2zM1267 321l2 2 2-2zM1267 348l2 2 2-2zM1267 392l2 2 2-2zM1267 418l2 2 2-2z" fill="#888"/>
            <path d="M1264 287l-3-3 1-1 3 2v-8h1.500v6-8h1.500v8-7h1.500v7-5h1.500v8l1-3h1.500l-1 6q-1 5-5 5-3 0-4-7z" fill="#f8f8f8" stroke="#888" stroke-width=".8"/>
            <path d="M1262 302h6M1265 299v6M1262 308h6" stroke="#666"/>
            <circle cx="1270" cy="310" r="3.500" fill="#fff" stroke="#888"/>
            <path d="M1273 313l3 3" stroke="#888" stroke-width="1.500"/>
            <ellipse cx="1269" cy="336" rx="4" ry="7" fill="#fff" stroke="#888"/>
            <circle cx="1270" cy="336" r="2.500" fill="#9ac5e6"/>
            <path d="M1261 336l3-3M1261 336l3 3M1277 336l-3-3M1277 336l-3 3" stroke="#888" fill="none"/>
            <path d="M1262 360h13v12h-13z" fill="#eee" stroke="#888"/><path d="M1264 363h9v5h-9z" fill="#bbb"/>
            <path d="M1263 360l2-3 2 2 3-2 1 3" fill="#888"/>
            <path d="M1263 380l3-3h9v9l-3 3h-9z" fill="#fff" stroke="#999"/><path d="M1263 380h9v9" fill="none" stroke="#999"/>
            <circle cx="1266" cy="402" r="4" fill="#8fbfe4" stroke="#777" stroke-width=".6"/>
            <path d="M1268 405h6v5h-6z" fill="#cfe3f3" stroke="#888" stroke-width=".6"/>
          </g>
          <!-- cursor -->
          <path d="M965.500 504.500v10.500l2.300-2 2 4 1.700-.9-2-3.800h3z" fill="#fff" stroke="#222" stroke-width=".8"/>
        </svg>
      </div>
      <div class="doctabs">
        <div class="dhome"><svg><use href="#homev"/></svg></div>
        <div class="dtab">Part1<svg class="x"><use href="#close"/></svg></div>
        <svg class="dburger"><use href="#burger"/></svg>
      </div>
    </div>
  </main>

  <footer class="status">
    <span class="ready">Ready</span>
    <span class="cell">1</span>
    <span class="cell">1</span>
  </footer>
</div>
</body>
</html>
```

FILE: styles.css
```css
* { box-sizing: border-box; }
html, body { margin: 0; height: 100%; background: #000; overflow: hidden; }
body { font-family: Roboto, "Open Sans", sans-serif; font-size: 10.200px; color: #555; }
.defs { position: absolute; }
i, b { display: block; font-style: normal; }
.app { width: 1280px; height: 703px; padding-top: 16px; display: flex; flex-direction: column; }

/* title bar */
.titlebar { height: 22px; padding-bottom: 4px; background: #dcdcdc; display: flex; align-items: center; font-size: 10.400px; color: #4a4a4a; }
.logo { width: 14px; height: 16px; margin: 0 6px 0 3px; flex: none; }
.qa { width: 20px; height: 16px; display: flex; justify-content: center; flex: none; }
.qa svg { width: 14px; height: 14px; margin-top: 1px; }
.qc { width: 10px; height: 6px; flex: none; }
.qc::after { content: ""; display: block; margin: 2px auto 0; width: 0; border: 2px solid transparent; border-top: 2.500px solid #666; }
.fx { font: italic 14px "Liberation Serif", serif; color: #666; line-height: 15px; align-items: center; }
.qcombo { height: 17px; background: #e9e9e9; display: flex; align-items: center; flex: none; padding-left: 5px; }
.material { width: 82px; background: #f0f0f0; justify-content: space-between; padding-right: 2px; }
.visual { width: 83px; padding-left: 3px; padding-right: 2px; }
.visual svg { width: 13px; height: 13px; margin-right: 3px; flex: none; }
.clip { width: 58px; white-space: nowrap; }
.apptitle { margin-left: 63px; display: flex; gap: 11px; white-space: nowrap; }
.t-right { margin-left: auto; width: 414px; display: flex; align-items: center; height: 100%; }
.tri-r { width: 10px; flex: none; }
.tri-r::after { content: ""; display: block; margin-left: 3px; width: 0; border: 3px solid transparent; border-left: 4px solid #666; }
.searchbox { width: 150px; height: 17px; background: #f4f4f4; padding-left: 4px; line-height: 16px; color: #444; }
.t-user { width: 15px; height: 15px; margin: 0 5px 0 2px; }
.username { width: 66px; font-size: 10px; white-space: nowrap; }
.t-cart { width: 15px; height: 15px; }
.t-sep { width: 1px; height: 16px; background: #c8c8c8; margin: 0 6px 0 7px; }
.t-help { width: 14px; height: 14px; }
.winctl { margin-left: auto; display: flex; align-items: center; }
.winctl span { width: 20px; height: 16px; position: relative; display: block; }
.min::after { content: ""; position: absolute; left: 6px; top: 11px; width: 7px; height: 2px; background: #333; }
.rest::after { content: ""; position: absolute; left: 6px; top: 5px; width: 7px; height: 7px; border: 1px solid #333; border-top-width: 2px; background: #dcdcdc; }
.rest::before { content: ""; position: absolute; left: 8px; top: 3px; width: 7px; height: 6px; border: 1px solid #333; border-top-width: 2px; }
.cls svg { width: 11px; height: 11px; margin: 3px 0 0 4px; display: block; }

/* tabs */
.tabs { height: 18px; background: #dcdcdc; display: flex; align-items: center; font-size: 10.600px; color: #666; }
.tab { height: 18px; line-height: 19px; white-space: nowrap; flex: none; }
.file { width: 37px; background: #f9a825; color: #fff; text-align: center; }
.t1 { width: 60px; margin-left: 9px; }
.t2 { width: 46px; }
.t3 { width: 57px; }
.t4 { width: 48px; }
.t5 { width: 40px; }
.t6 { width: 38px; }
.t7 { width: 44px; }
.active { width: 37px; background: #f5f5f5; text-align: center; color: #555; }
.t9 { width: 76px; margin-left: 8px; }
.t10 { width: 67px; }
.t11 { width: 78px; }
.widget { width: 14px; height: 9px; }

/* ribbon */
.ribbon { height: 80px; background: #f5f5f5; display: flex; }
.panel { display: flex; flex-direction: column; border-right: 1px solid #e0e0e0; flex: none; }
.pbody { height: 64px; display: flex; padding-top: 2.400px; }
.ptitle { height: 17px; line-height: 17px; text-align: center; display: flex; justify-content: center; align-items: center; gap: 5px; color: #5a5a5a; }
.p-vis { width: 270px; padding-left: 5px; }
.p-app { width: 375px; }
.p-win { width: 230px; padding-left: 6px; }
.p-nav { width: 244px; border-right: 0; padding-left: 5px; }
.col { display: flex; flex-direction: column; flex: none; }
.cmd { height: 20.500px; display: flex; align-items: center; gap: 3px; white-space: nowrap; }
.cmd svg { width: 14px; height: 14px; flex: none; }
.off { color: #b4b4b4; }
.off svg { opacity: .8; }
.caret { display: block; width: 0; height: 0; border: 2.500px solid transparent; border-top: 3px solid #777; border-bottom: 0; margin-left: 6px; flex: none; }
.caret.dark { border: 3px solid transparent; border-top: 3.500px solid #333; border-bottom: 0; margin-left: 0; }
.big { position: relative; display: flex; flex-direction: column; align-items: center; text-align: center; line-height: 13px; flex: none; white-space: nowrap; }
.big span { position: absolute; top: 31.500px; left: 0; right: 0; }
.ico30 { width: 30px; height: 28px; }
.ico26 { width: 26px; height: 26px; margin-top: 2px; }
.caret.side { position: absolute; margin: 0; right: -3px; top: 42px; border-top-color: #444; }
.caret.under { position: absolute; margin: 0 0 0 -2px; left: 50%; top: 47px; border-top-color: #444; }
.b-obj { width: 47px; }
.b-vs { width: 68px; }
.c-a { width: 99px; margin-left: 5px; }
.c-q { width: 85px; }
.c-o { width: 111px; }
.combo { display: flex; align-items: center; justify-content: space-between; background: #fff; border: 1px solid #dedede; height: 18px; padding: 0 2px 0 5px; }
.hq { width: 82px; margin: 1px 0 1.500px; }
.ibl { width: 108px; margin-top: 1px; padding-left: 3px; }
.ibl svg { width: 14px; height: 14px; margin-right: 3px; }
.ibl span { flex: 1; }
.b-ui { width: 44px; }
.b-cl { width: 42px; }
.b-sw { width: 38px; }
.c-w { margin-left: 6px; }
.b-nav { width: 76px; }
.c-n { width: 80px; margin-left: 8px; }

/* main */
.work { flex: 1; display: flex; min-height: 0; background: #fff; }
.browser { width: 127px; display: flex; flex-direction: column; background: #f5f5f5; flex: none; }
.bhead { height: 17px; display: flex; align-items: center; background: #e9e9e9; font-size: 9.300px; color: #444; }
.btab { width: 41px; height: 17px; background: #f5f5f5; display: flex; align-items: center; padding-left: 2px; gap: 5px; }
.btab .x { width: 7px; height: 7px; }
.bplus { width: 12px; margin-left: 4px; font-size: 14px; line-height: 14px; color: #777; text-align: center; }
.bsearch { width: 11px; height: 11px; margin-left: 37px; }
.bburger { width: 11px; height: 10px; margin-left: 6px; }
.bbody { flex: 1; display: flex; min-height: 0; }
.tree { flex: 1; height: 515px; overflow: hidden; font-size: 8.800px; color: #444; background-image: repeating-linear-gradient(#bbb 0 2px, transparent 2px 4px); background-size: 1px 100%; background-position: 6px 0; background-repeat: no-repeat; }
.row { height: 16.650px; display: flex; align-items: center; white-space: nowrap; }
.row svg { width: 13px; height: 13px; margin-right: 2px; flex: none; }
.ex { width: 15px; height: 16px; position: relative; flex: none; }
.ex.p::before, .ex.m::before { content: ""; position: absolute; left: 3px; top: 7px; width: 7px; height: 2px; background: #777; }
.ex.m::before { background: #333; }
.ex.p::after { content: ""; position: absolute; left: 5.500px; top: 4.500px; width: 2px; height: 7px; background: #888; }
.l1 { padding-left: 13px; }
.vscroll { width: 15px; display: flex; flex-direction: column; }
.vthumb { height: 308px; margin-top: 15px; background: #c8c8c8; flex: none; }
.chev { width: 5px; height: 5px; border-left: 1px solid #888; border-top: 1px solid #888; flex: none; }
.ch-up { transform: rotate(45deg); margin: 5px 0 0 3px; }
.ch-down { transform: rotate(225deg); margin: 172px 0 0 3px; }
.ch-left { transform: rotate(-45deg); margin-left: 4px; }
.ch-right { transform: rotate(135deg); margin-left: 4px; }
.hscroll { height: 15px; display: flex; align-items: center; background: #f5f5f5; }
.hthumb { width: 85px; height: 15px; background: #c8c8c8; margin-left: 4px; flex: none; }
.stage { flex: 1; display: flex; flex-direction: column; min-width: 0; }
.viewport { flex: 1; position: relative; background: #fff; min-height: 0; }
.scene { position: absolute; left: 0; top: 0; width: 1153px; height: 527px; display: block; }
.fin { stroke: #2d2d2d; stroke-width: .6; }
.f-a { fill: #717171; }
.f-b { fill: #9a9a9a; }
.f-top { fill: #8b8b8b; stroke-width: .7; }
.triad text { font-size: 9px; }
.cube text { font-size: 7px; fill: #999; }
.doctabs { height: 20px; background: #dadada; display: flex; align-items: stretch; font-size: 10.600px; }
.dhome { width: 21px; background: #ececec; display: flex; align-items: center; justify-content: center; }
.dhome svg { width: 14px; height: 14px; }
.dtab { width: 49px; background: #f3f3f3; border-bottom: 2px solid #2a86c5; color: #2a86c5; display: flex; align-items: center; padding-left: 8px; gap: 9px; }
.dtab .x { width: 8px; height: 8px; }
.dburger { width: 13px; height: 11px; margin: 5px 2px 0 auto; }
.status { height: 20px; background: #efefef; display: flex; align-items: center; padding-left: 1px; font-size: 10.400px; color: #555; }
.ready { flex: 1; }
.cell { width: 26px; height: 20px; border-left: 1px solid #d8d8d8; line-height: 20px; padding-left: 8px; }
```
